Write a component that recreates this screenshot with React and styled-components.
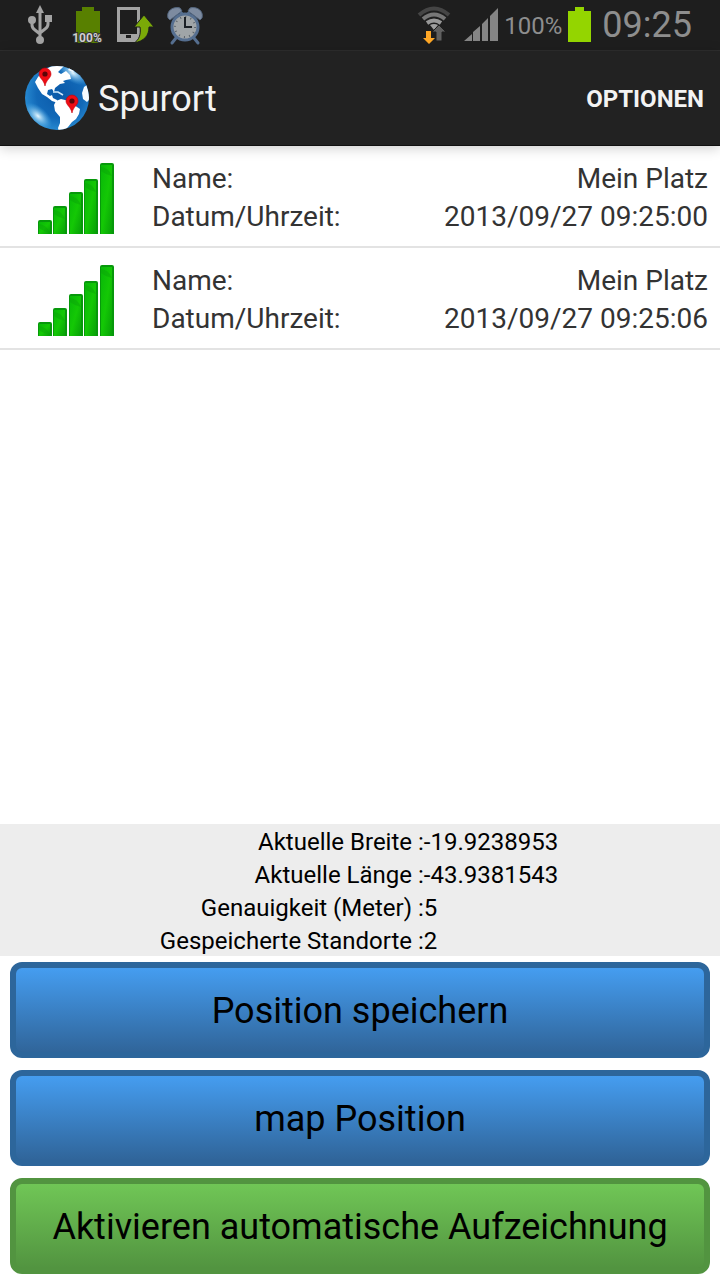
import React from "react";
import styled, { createGlobalStyle } from "styled-components";

const GlobalStyle = createGlobalStyle`
  body {
    margin: 0;
    background: #fff;
    font-family: Roboto, "Liberation Sans", sans-serif;
  }
`;

const Page = styled.div`
  min-height: 100vh;
  display: flex;
  flex-direction: column;
`;

const StatusBar = styled.div`
  height: 51px;
  box-sizing: border-box;
  border-bottom: 1px solid #2e2e2e;
  background: #1e1e1e;
  color: #8e8e8e;
  display: flex;
  align-items: center;
  justify-content: space-between;
  padding: 0 28px 0 24px;
  svg {
    display: block;
  }
`;

const StatusGroup = styled.div`
  display: flex;
  align-items: center;
  gap: ${(props) => props.$gap};
`;

const Percent = styled.span`
  font-size: 24px;
  line-height: 32px;
  padding-top: 2px;
`;

const Clock = styled.span`
  font-size: 36px;
  line-height: 48px;
  margin-left: 4px;
`;

const AppBar = styled.header`
  height: 95px;
  box-sizing: border-box;
  background: #222;
  border-bottom: 1px solid #111;
  color: #f3f3f3;
  display: flex;
  align-items: center;
  padding: 0 16px 0 24px;
  box-shadow: 0 2px 12px rgba(0, 0, 0, 0.2);

  h1 {
    flex: 1;
    margin: 0 0 0 8px;
    padding-top: 2px;
    font-size: 36px;
    font-weight: 400;
    line-height: 48px;
  }
`;

const OptionsButton = styled.button`
  border: none;
  padding: 2px 0 0;
  background: none;
  color: inherit;
  font-family: inherit;
  font-size: 24px;
  font-weight: 700;
  line-height: 32px;
  cursor: pointer;
`;

const PlaceList = styled.ul`
  flex: 1;
  margin: 0;
  padding: 0;
  list-style: none;
`;

const PlaceRow = styled.li`
  display: flex;
  align-items: center;
  padding: 14px 12px 10px 36px;
  border-bottom: 2px solid #e3e3e3;
  color: #333;
  font-size: 28px;
  line-height: 38px;

  dl {
    flex: 1;
    margin: 0 0 0 36px;
  }
  dl div {
    display: flex;
    justify-content: space-between;
  }
  dd {
    margin: 0;
  }
`;

const InfoPanel = styled.dl`
  margin: 0;
  background: #ededed;
  color: #000;
  font-size: 24px;
  line-height: 36px;

  div {
    height: 33px;
    display: grid;
    grid-template-columns: calc(59% - 1px) 1fr;
  }
  dt {
    text-align: right;
    white-space: pre;
  }
  dd {
    margin: 0;
  }
`;

const Actions = styled.div`
  display: flex;
  flex-direction: column;
  gap: 12px;
  padding: 6px 10px;
`;

const ActionButton = styled.button`
  height: 96px;
  border: 6px solid ${(props) => (props.$green ? "#529440" : "#2d669b")};
  border-radius: 12px;
  background: ${(props) =>
    props.$green
      ? "linear-gradient(#70c656, #529440)"
      : "linear-gradient(#459df0, #30659a)"};
  color: #000;
  font-family: inherit;
  font-size: 36px;
  line-height: 48px;
  padding: 2px 0 0;
  cursor: pointer;
`;

const UsbIcon = () => (
  <svg width="34" height="42" viewBox="0 0 34 42">
    <g fill="none" stroke="#a3a3a3" strokeWidth="3">
      <path d="M16 7v29M8 17v4q0 3 3 5l5 4M24 15v5q0 3-3 5l-5 4" />
    </g>
    <g fill="#a3a3a3">
      <path d="M16 1l4 8h-8z" />
      <circle cx="8" cy="16" r="4" />
      <path d="M21 11h7v7h-7z" />
      <circle cx="16" cy="36" r="4" />
    </g>
  </svg>
);

const BatteryUsbIcon = () => (
  <svg width="34" height="42" viewBox="0 0 34 42">
    <path d="M12 3h12v4h6v32H6V7h6z" fill="#588000" />
    <text
      x="17"
      y="38"
      textAnchor="middle"
      fontSize="12"
      fontWeight="700"
      fill="#d0d0d0"
      stroke="#333"
      strokeWidth="2"
      paintOrder="stroke"
    >
      100%
    </text>
  </svg>
);

const PhoneUploadIcon = () => (
  <svg width="38" height="42" viewBox="0 0 38 42">
    <path
      d="M1 3h23v33h-1l-2 2H1zM4 6v24h17V6zM10 31v3h5v-3z"
      fill="#a3a3a3"
      fillRule="evenodd"
    />
    <path
      d="M28 11l10 12h-5c0 9-5 14-15 16 5-3 7-8 6-16h-6z"
      fill="#7baa08"
      stroke="#1e1e1e"
      strokeWidth="1"
    />
  </svg>
);

const AlarmIcon = () => (
  <svg width="38" height="42" viewBox="0 0 38 42">
    <path
      d="M10 34l-4 5M28 34l4 5M12 5l4 5M26 5l-4 5"
      stroke="#566f90"
      strokeWidth="3"
      strokeLinecap="round"
    />
    <path
      d="M2 14C0 7 7 2 14 4l2 3L4 16zM36 14C38 7 31 2 24 4l-2 3 12 9z"
      fill="#7d8ba0"
      stroke="#53657e"
      strokeWidth="1"
    />
    <circle cx="19" cy="23" r="13" fill="#a0a5a8" stroke="#566f90" strokeWidth="3" />
    <circle
      cx="19"
      cy="23"
      r="10"
      fill="none"
      stroke="#596168"
      strokeWidth="2"
      strokeDasharray="1 4.236"
    />
    <path d="M19 13v10h7" fill="none" stroke="#1b2026" strokeWidth="2" />
  </svg>
);

const WifiIcon = () => (
  <svg width="36" height="40" viewBox="0 0 36 40">
    <g fill="none" strokeWidth="4">
      <path d="M3 10Q18-3 33 10" stroke="#454545" />
      <path d="M7 14q11-9 22 0" stroke="#777" />
      <path d="M11 18q7-5 14 0" stroke="#999" />
    </g>
    <path d="M14 20q4-2 8 0l-4 5z" fill="#a0a0a0" />
    <path d="M10 26h5v7h4l-6 6-6-6h3z" fill="#ffa726" />
    <path d="M20 36v-9h-4l7-7 7 7h-4v9z" fill="#606060" stroke="#1e1e1e" />
  </svg>
);

const SignalIcon = () => (
  <svg width="34" height="34" viewBox="0 0 34 34" fill="#858585">
    <path d="M0 33L8 26V33zM9 33V24l7-6v15zM18 33V16l6-6v23zM26 33V8l8-8v33z" />
  </svg>
);

const BatteryIcon = () => (
  <svg width="24" height="36" viewBox="0 0 24 36" fill="#94d500">
    <path d="M7 0h9v4h7v31H0V4h7z" />
  </svg>
);

const Pin = ({ x, y }) => (
  <g transform={`translate(${x} ${y})`}>
    <path
      d="M0 18C-1 12-6 10-6 6A6 6 0 0 1 6 6C6 10 1 12 0 18z"
      fill="#ee0c14"
      stroke="#c5000a"
      strokeWidth=".6"
    />
    <circle cx="0" cy="6" r="2.6" fill="#5b0508" />
  </g>
);

const GlobeLogo = () => (
  <svg width="66" height="66" viewBox="0 0 66 66">
    <defs>
      <radialGradient id="sea" cx=".55" cy=".45" r=".6">
        <stop offset="0" stopColor="#0a59a8" />
        <stop offset=".6" stopColor="#1269b8" />
        <stop offset="1" stopColor="#2d93d8" />
      </radialGradient>
      <radialGradient id="shine">
        <stop offset="0" stopColor="#e8f8ff" />
        <stop offset="1" stopColor="#52b4ee" stopOpacity="0" />
      </radialGradient>
      <clipPath id="ball">
        <circle cx="33" cy="33" r="32" />
      </clipPath>
    </defs>
    <g clipPath="url(#ball)">
      <rect width="66" height="66" fill="url(#sea)" />
      <ellipse cx="14" cy="51" rx="17" ry="9" fill="url(#shine)" transform="rotate(42 14 51)" />
      <ellipse cx="49" cy="8" rx="17" ry="9" fill="url(#shine)" transform="rotate(35 49 8)" />
      {/* north america */}
      <path
        d="M11 17l3-5 6-7 8-4 12 0-3 3-3 3 3 2 5-3 4 4 1 4-5 1-3 1 2 2-5 1-5 4-1 4-2-3-4 1-1 4 3 2 2-1 1 3 4 2 1 3-6-2-5-4-5-3-4-6-2-4z"
        fill="#fff"
      />
      {/* south america */}
      <path
        d="M32 36l5-2 8 2 5 4 6 4-1 5-3 5-4 3-4 5-4 4-5 1-1-4 2-5 0-6-5-6-1-6z"
        fill="#fff"
      />
      <path d="M60 22l3-2 3 14-3 3-4-3-1-6zM46 2l6 2-3 3-5-2z" fill="#f5fbff" />
      <path d="M29 27l5 0 5 3" stroke="#cce7fa" strokeWidth="1.5" fill="none" />
    </g>
    <Pin x={21} y={3} />
    <Pin x={48} y={30} />
  </svg>
);

const bars = [
  { x: 2, top: 58 },
  { x: 17, top: 44 },
  { x: 33, top: 30 },
  { x: 48, top: 17 },
  { x: 64, top: 1 },
];

const BarsIcon = () => (
  <svg width="80" height="72" viewBox="0 0 80 72">
    <defs>
      <linearGradient id="bar" x1="0" x2="1" y1="0" y2="1">
        <stop offset="0" stopColor="#08b808" />
        <stop offset=".5" stopColor="#14c805" />
        <stop offset="1" stopColor="#07a007" />
      </linearGradient>
    </defs>
    {bars.map((b) => (
      <g key={b.x}>
        <path
          d={`M${b.x} 72V${b.top + 2}q0-2 2-2h10q2 0 2 2V72z`}
          fill="#07980b"
        />
        <path d={`M${b.x + 1} 72V${b.top + 2}h11V72z`} fill="url(#bar)" />
        <path
          d={`M${b.x + 1} ${b.top + 4}q8 1 11 9q-7-2-11-5z`}
          fill="#0aa508"
          opacity=".5"
        />
      </g>
    ))}
  </svg>
);

const places = [
  { name: "Mein Platz", date: "2013/09/27 09:25:00" },
  { name: "Mein Platz", date: "2013/09/27 09:25:06" },
];

const info = [
  { label: "Aktuelle Breite :", value: "-19.9238953" },
  { label: "Aktuelle Länge :", value: "-43.9381543" },
  { label: "Genauigkeit (Meter) :", value: "5" },
  { label: "Gespeicherte Standorte :", value: "2" },
];

function App() {
  return (
    <>
      <GlobalStyle />
      <Page>
        <StatusBar>
          <StatusGroup $gap="12px">
            <UsbIcon />
            <BatteryUsbIcon />
            <PhoneUploadIcon />
            <AlarmIcon />
          </StatusGroup>
          <StatusGroup $gap="6px">
            <StatusGroup $gap="12px">
              <WifiIcon />
              <SignalIcon />
            </StatusGroup>
            <Percent>100%</Percent>
            <BatteryIcon />
            <Clock>09:25</Clock>
          </StatusGroup>
        </StatusBar>
        <AppBar>
          <GlobeLogo />
          <h1>Spurort</h1>
          <OptionsButton>OPTIONEN</OptionsButton>
        </AppBar>
        <PlaceList>
          {places.map((p) => (
            <PlaceRow key={p.date}>
              <BarsIcon />
              <dl>
                <div>
                  <dt>Name:</dt>
                  <dd>{p.name}</dd>
                </div>
                <div>
                  <dt>Datum/Uhrzeit:</dt>
                  <dd>{p.date}</dd>
                </div>
              </dl>
            </PlaceRow>
          ))}
        </PlaceList>
        <InfoPanel>
          {info.map((i) => (
            <div key={i.label}>
              <dt>{i.label}</dt>
              <dd>{i.value}</dd>
            </div>
          ))}
        </InfoPanel>
        <Actions>
          <ActionButton>Position speichern</ActionButton>
          <ActionButton>map Position</ActionButton>
          <ActionButton $green>Aktivieren automatische Aufzeichnung</ActionButton>
        </Actions>
      </Page>
    </>
  );
}

export default App;
